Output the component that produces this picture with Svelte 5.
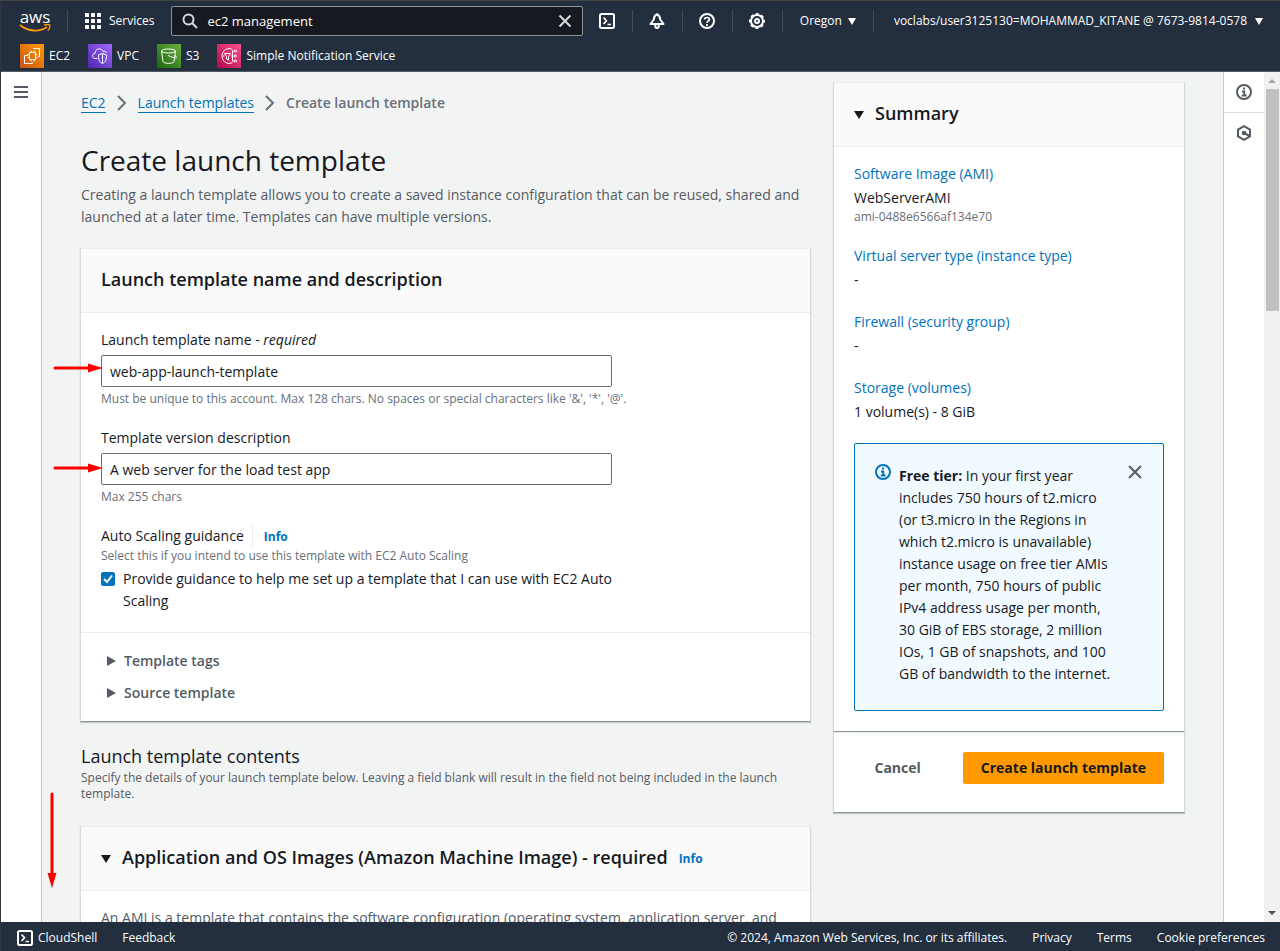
<script>
  let query = $state('ec2 management');
  let templateName = $state('web-app-launch-template');
  let description = $state('A web server for the load test app');
  let guidance = $state(true);

  const summary = [
    { label: 'Software Image (AMI)', value: 'WebServerAMI', note: 'ami-0488e6566af134e70' },
    { label: 'Virtual server type (instance type)', value: '-' },
    { label: 'Firewall (security group)', value: '-' },
    { label: 'Storage (volumes)', value: '1 volume(s) - 8 GiB' }
  ];
</script>

{#snippet shell()}
  <svg width="16" height="16" viewBox="0 0 16 16" fill="none" stroke="currentColor" stroke-width="2" aria-hidden="true">
    <rect x="1" y="1" width="14" height="14" rx="1.5" />
    <path d="M4.500 4.500 7.500 7.800 4.500 11M8.500 11.500H12" stroke-width="1.700" />
  </svg>
{/snippet}

{#snippet info()}
  <svg width="16" height="16" viewBox="0 0 16 16" fill="none" stroke="currentColor" stroke-width="2" aria-hidden="true">
    <circle cx="8" cy="8" r="7" />
    <path d="M8 3.500v2M6 7.500H8.200V11M5.800 11.500h4.800" />
  </svg>
{/snippet}

{#snippet cross()}
  <svg width="16" height="16" viewBox="0 0 16 16" fill="none" stroke="currentColor" stroke-width="2" aria-hidden="true">
    <path d="M2 2 14 14M14 2 2 14" />
  </svg>
{/snippet}

{#snippet caret()}
  <svg width="8" height="7" viewBox="0 0 8 7" fill="currentColor" aria-hidden="true"><path d="M0 0H8L4 7Z" /></svg>
{/snippet}

{#snippet down()}
  <svg width="10" height="8" viewBox="0 0 10 8" fill="currentColor" aria-hidden="true"><path d="M0 0H10L5 8Z" /></svg>
{/snippet}

{#snippet right()}
  <svg width="9" height="10" viewBox="0 0 9 10" fill="currentColor" aria-hidden="true"><path d="M0 0 9 5 0 10Z" /></svg>
{/snippet}

{#snippet chevron()}
  <svg width="10" height="16" viewBox="0 0 10 16" fill="none" stroke="currentColor" stroke-width="2" aria-hidden="true"><path d="M1 1 8 8 1 15" /></svg>
{/snippet}

<div class="page">
  <header class="top">
    <div class="bar">
      <a class="logo" href="#home" aria-label="AWS home">
        <span>aws</span>
        <svg width="32" height="8" viewBox="0 0 32 8" aria-hidden="true">
          <path d="M1 1C9 8 21 8 28 3" fill="none" stroke="#ff9900" stroke-width="1.800" />
          <path d="M25 1.200C28 .2 31 .4 31 1.200S30.500 5 28.800 6.500" fill="none" stroke="#ff9900" stroke-width="1.300" />
        </svg>
      </a>
      <span class="sep"></span>
      <button class="services">
        <svg width="16" height="16" viewBox="0 0 16 16" fill="currentColor" aria-hidden="true">
          {#each [0, 6, 12] as y}
            {#each [0, 6, 12] as x}
              <rect {x} {y} width="4" height="4" rx="0.500" />
            {/each}
          {/each}
        </svg>
        Services
      </button>
      <div class="search">
        <svg width="16" height="16" viewBox="0 0 16 16" fill="none" stroke="#d5dbdb" stroke-width="2" aria-hidden="true">
          <circle cx="6.500" cy="6.500" r="5" /><path d="M10 10 15 15" />
        </svg>
        <input type="text" aria-label="Search" bind:value={query} />
        <button aria-label="Clear search" onclick={() => (query = '')}>
          <svg width="14" height="14" viewBox="0 0 14 14" fill="none" stroke="currentColor" stroke-width="2" aria-hidden="true"><path d="M1.500 1.500 12.500 12.500M12.500 1.500 1.500 12.500" /></svg>
        </button>
      </div>
      <button class="tool" aria-label="CloudShell">{@render shell()}</button>
      <span class="sep"></span>
      <button class="tool" aria-label="Notifications">
        <svg width="16" height="16" viewBox="0 0 16 16" fill="none" stroke="currentColor" stroke-width="2" stroke-linejoin="round" aria-hidden="true">
          <path d="M8 1.200C6 2 5 3.500 4.800 6.500L1.500 11H14.500L11.200 6.500C11 3.500 10 2 8 1.200Z" /><path d="M6.300 12v1.300a1.700 1.700 0 0 0 3.400 0V12" />
        </svg>
      </button>
      <span class="sep"></span>
      <button class="tool" aria-label="Help">
        <svg width="16" height="16" viewBox="0 0 16 16" fill="none" stroke="currentColor" stroke-width="2" aria-hidden="true">
          <circle cx="8" cy="8" r="7" />
          <path d="M5.600 6.500C5.600 3.800 10.400 3.800 10.400 6.500 10.400 8 8 8 8 9.800M8 11v2" stroke-width="1.700" />
        </svg>
      </button>
      <span class="sep"></span>
      <button class="tool" aria-label="Settings">
        <svg width="16" height="16" viewBox="0 0 16 16" fill="none" stroke="currentColor" stroke-width="2" aria-hidden="true">
          <circle cx="8" cy="8" r="6" />
          <circle cx="8" cy="8" r="7" stroke-dasharray="3 2.498" stroke-dashoffset="1.500" />
          <circle cx="8" cy="8" r="2" />
        </svg>
      </button>
      <span class="sep"></span>
      <button class="drop">Oregon {@render caret()}</button>
      <span class="sep"></span>
      <button class="drop account">voclabs/user3125130=MOHAMMAD_KITANE @ 7673-9814-0578 {@render caret()}</button>
    </div>
    <nav class="favs" aria-label="Favorites">
      <a href="#ec2">
        <svg width="24" height="24" viewBox="0 0 24 24" fill="none" stroke="#fff" aria-hidden="true">
          <defs><linearGradient id="g1" x1="0" y1="1" x2="1" y2="0"><stop stop-color="#c8511b" /><stop offset="1" stop-color="#ff9900" /></linearGradient></defs>
          <rect width="24" height="24" fill="url(#g1)" stroke="none" />
          <path d="M9.500 8.500h6v7h-6ZM11 8.500v-2M14 8.500v-2M11 17.500v-2M14 17.500v-2M9.500 10.500h-2M9.500 13.500h-2M17.500 10.500h-2M17.500 13.500h-2M13.500 5V4.500h6v8H18M8 11.500H4.500v8h8V18.500" />
        </svg>EC2</a>
      <a href="#vpc">
        <svg width="24" height="24" viewBox="0 0 24 24" fill="none" stroke="#fff" aria-hidden="true">
          <defs><linearGradient id="g2" x1="0" y1="1" x2="1" y2="0"><stop stop-color="#4d27a8" /><stop offset="1" stop-color="#a166ff" /></linearGradient></defs>
          <rect width="24" height="24" fill="url(#g2)" stroke="none" />
          <path d="M9.500 14.500H7C3.500 14 4 9.500 7 9.500 7 4 13.500 3.500 15 7.500c2-1 3 0 3.200 1.500M14.500 9.500l4 1.500c0 5-1 7.500-4 8.500-3-1-4-3.500-4-8.500ZM14.500 9.500V19" />
        </svg>VPC</a>
      <a href="#s3">
        <svg width="24" height="24" viewBox="0 0 24 24" fill="none" stroke="#fff" aria-hidden="true">
          <defs><linearGradient id="g3" x1="0" y1="1" x2="1" y2="0"><stop stop-color="#1b660f" /><stop offset="1" stop-color="#6cae3e" /></linearGradient></defs>
          <rect width="24" height="24" fill="url(#g3)" stroke="none" />
          <ellipse cx="11.500" cy="7" rx="7" ry="2" />
          <path d="M4.500 7 6 17.500c1 2.500 10 2.500 11 0L18.500 7M11 11.500c3 1.500 8 3 8.500 2 .3-.8-1.500-1.800-2-2" />
        </svg>S3</a>
      <a href="#sns">
        <svg width="24" height="24" viewBox="0 0 24 24" fill="none" stroke="#fff" aria-hidden="true">
          <defs><linearGradient id="g4" x1="0" y1="1" x2="1" y2="0"><stop stop-color="#b0084d" /><stop offset="1" stop-color="#ff4f8b" /></linearGradient></defs>
          <rect width="24" height="24" fill="url(#g4)" stroke="none" />
          <path d="M15.500 5.500C11 3 5.500 6 5.200 11M5.200 13C5.500 18 11 21 15.500 18.500M4 12h3.500M7.500 9.500h6L11.500 12.500v3.500l-2-1v-2.500ZM14 12h4M18 7h-2.500v10H18" />
          <circle cx="18.500" cy="7" r="1" /><circle cx="18.500" cy="12" r="1" /><circle cx="18.500" cy="17" r="1" />
        </svg>Simple Notification Service</a>
    </nav>
  </header>

  <div class="body">
    <div class="rail left">
      <button aria-label="Open navigation">
        <svg width="14" height="12" viewBox="0 0 14 12" stroke="currentColor" stroke-width="2" aria-hidden="true"><path d="M0 1H14M0 6H14M0 11H14" /></svg>
      </button>
    </div>

    <main>
      <div class="column">
        <nav class="crumbs" aria-label="Breadcrumbs">
          <a href="#ec2">EC2</a>{@render chevron()}<a href="#templates">Launch templates</a>{@render chevron()}<span>Create launch template</span>
        </nav>
        <h1>Create launch template</h1>
        <p class="lead">Creating a launch template allows you to create a saved instance configuration that can be reused, shared and launched at a later time. Templates can have multiple versions.</p>

        <section class="card">
          <div class="head"><h2>Launch template name and description</h2></div>
          <div class="form">
            <div class="field">
              <label for="name">Launch template name - <em>required</em></label>
              <input id="name" type="text" bind:value={templateName} />
              <small>Must be unique to this account. Max 128 chars. No spaces or special characters like '&amp;', '*', '@'.</small>
            </div>
            <div class="field">
              <label for="desc">Template version description</label>
              <input id="desc" type="text" bind:value={description} />
              <small>Max 255 chars</small>
            </div>
            <div class="field">
              <div class="title"><span>Auto Scaling guidance</span><a class="info" href="#info">Info</a></div>
              <small>Select this if you intend to use this template with EC2 Auto Scaling</small>
              <label class="check"><input type="checkbox" bind:checked={guidance} /><span>Provide guidance to help me set up a template that I can use with EC2 Auto Scaling</span></label>
            </div>
          </div>
          <div class="more">
            <button>{@render right()}Template tags</button>
            <button>{@render right()}Source template</button>
          </div>
        </section>

        <div class="contents">
          <h2>Launch template contents</h2>
          <p>Specify the details of your launch template below. Leaving a field blank will result in the field not being included in the launch template.</p>
        </div>

        <section class="card">
          <div class="head">
            <button class="toggle">{@render down()}<span>Application and OS Images (Amazon Machine Image) - required</span></button>
            <a class="info" href="#info">Info</a>
          </div>
          <p class="intro">An AMI is a template that contains the software configuration (operating system, application server, and</p>
        </section>
      </div>

      <aside>
        <section class="card">
          <div class="head"><button class="toggle">{@render down()}<span>Summary</span></button></div>
          <div class="facts">
            {#each summary as item}
              <div class="fact">
                <a href="#edit">{item.label}</a>
                <span>{item.value}</span>
                {#if item.note}<small>{item.note}</small>{/if}
              </div>
            {/each}
            <div class="alert">
              <span class="mark">{@render info()}</span>
              <p><b>Free tier:</b> In your first year includes 750 hours of t2.micro (or t3.micro in the Regions in which t2.micro is unavailable) instance usage on free tier AMIs per month, 750 hours of public IPv4 address usage per month, 30 GiB of EBS storage, 2 million IOs, 1 GB of snapshots, and 100 GB of bandwidth to the internet.</p>
              <button aria-label="Dismiss">{@render cross()}</button>
            </div>
          </div>
        </section>
        <section class="card actions">
          <button class="cancel">Cancel</button>
          <button class="primary">Create launch template</button>
        </section>
      </aside>

      <svg class="arrow first" width="50" height="10" viewBox="0 0 50 10" aria-hidden="true"><path d="M2 5H38" stroke="red" stroke-width="3" stroke-linecap="round" /><path d="M35 .5 50 5 35 9.500Z" fill="red" /></svg>
      <svg class="arrow second" width="50" height="10" viewBox="0 0 50 10" aria-hidden="true"><path d="M2 5H38" stroke="red" stroke-width="3" stroke-linecap="round" /><path d="M35 .5 50 5 35 9.500Z" fill="red" /></svg>
      <svg class="arrow third" width="10" height="96" viewBox="0 0 10 96" aria-hidden="true"><path d="M5 2V84" stroke="red" stroke-width="3" stroke-linecap="round" /><path d="M.5 81 5 96 9.500 81Z" fill="red" /></svg>
    </main>

    <div class="rail right">
      <button aria-label="Info panel">{@render info()}</button>
      <button aria-label="Tutorials">
        <svg width="16" height="16" viewBox="0 0 16 16" fill="none" stroke="currentColor" stroke-width="2" aria-hidden="true">
          <path d="M8 1.200 14 4.600V11.400L8 14.800 2 11.400V4.600Z" stroke-linejoin="round" />
          <circle cx="8" cy="8" r="2.300" fill="currentColor" stroke="none" /><path d="M8 8 13.500 11" />
        </svg>
      </button>
    </div>

    <div class="scroll" aria-hidden="true">
      <svg width="8" height="4" viewBox="0 0 8 4"><path d="M0 4 4 0 8 4Z" fill="#a3a3a3" /></svg>
      <span class="thumb"></span>
      <svg width="8" height="4" viewBox="0 0 8 4"><path d="M0 0 4 4 8 0Z" fill="#505050" /></svg>
    </div>
  </div>

  <footer>
    <button>{@render shell()}CloudShell</button>
    <button>Feedback</button>
    <span class="legal">© 2024, Amazon Web Services, Inc. or its affiliates.</span>
    <a href="#privacy">Privacy</a>
    <a href="#terms">Terms</a>
    <a href="#cookies">Cookie preferences</a>
  </footer>
</div>

<style>
  :global(body) { margin: 0; }
  .page {
    box-sizing: border-box;
    height: 100vh;
    display: flex;
    flex-direction: column;
    border-left: 1px solid #33373d;
    border-top: 1px solid #444;
    overflow: hidden;
    background: #f2f3f3;
    color: #16191f;
    font: 14px/22px "Open Sans", sans-serif;
  }
  .page :global(*) { box-sizing: border-box; }
  h1, h2, p { margin: 0; font-weight: 400; }
  button { font: inherit; color: inherit; background: none; border: 0; padding: 0; cursor: pointer; white-space: nowrap; }
  a { color: #0073bb; text-decoration: none; }
  svg { display: block; flex: none; }
  small { font-size: 12px; line-height: 16px; color: #687078; white-space: nowrap; }

  .top { background: #232f3e; color: #fff; border-bottom: 1px solid #545b64; font: 500 12px/20px "Open Sans", sans-serif; }
  .bar { display: flex; align-items: center; height: 40px; padding: 0 17px 0 18px; }
  .logo { display: flex; flex-direction: column; width: 32px; color: #fff; font: 500 17px/12px "Open Sans", sans-serif; text-align: center; }
  .logo svg { margin-top: 1px; }
  .sep { width: 1px; height: 22px; background: #414d5c; flex: none; }
  .logo + .sep { margin: 0 17px 0 16px; }
  .services { display: flex; align-items: center; gap: 8px; }
  .search { display: flex; align-items: center; flex: 1; height: 30px; margin-left: 17px; padding: 0 10px; gap: 9px; background: #16191f; border: 1px solid #879596; border-radius: 2px; }
  .search input { flex: 1; min-width: 0; border: 0; outline: 0; background: none; color: #fff; font: 500 13px/20px "Open Sans", sans-serif; padding: 0; }
  .search button { color: #d5dbdb; }
  .tool { display: grid; place-items: center; width: 49px; height: 40px; }
  .drop { display: flex; align-items: center; gap: 6px; padding: 0 17px; }
  .account { gap: 8px; padding: 0 0 0 20px; }
  .favs { display: flex; gap: 18px; height: 30px; padding: 3px 19px; }
  .favs a { display: flex; align-items: center; gap: 5px; height: 24px; color: #fff; }

  .body { flex: 1; min-height: 0; display: flex; }
  .rail { width: 41px; flex: none; background: #fff; color: #545b64; }
  .rail button { display: grid; place-items: center; width: 40px; height: 40px; }
  .left { border-right: 1px solid #c6cbcb; }
  .right { border-left: 1px solid #c6cbcb; }
  .right button:first-child { height: 41px; border-bottom: 1px solid #d5dbdb; }
  .scroll { width: 16px; flex: none; display: flex; flex-direction: column; align-items: center; background: #f1f1f1; padding: 7px 0; }
  .thumb { width: 13px; height: 222px; margin: 6px 0 auto 1px; background: #c1c1c1; }

  main { position: relative; flex: 1; min-width: 0; display: grid; grid-template-columns: minmax(0, 1fr) 352px; gap: 22px; padding: 10px 38px 0; overflow: hidden; align-items: start; }
  .card { background: #fff; border: 1px solid #d5dbdb; border-top-color: #eaeded; border-bottom-color: #879596; box-shadow: 0 1px 1px rgba(0, 28, 36, 0.200); }
  .head { display: flex; align-items: center; gap: 11px; height: 64px; padding: 0 20px; background: #fafafa; border-bottom: 1px solid #eaeded; }
  .head h2, .toggle { font-weight: 600; font-size: 18px; line-height: 22px; }
  .head h2, .toggle span { padding-bottom: 4px; }
  .toggle { display: flex; align-items: center; gap: 11px; }
  .info { font-size: 12px; line-height: 16px; font-weight: 700; }

  .column { padding-top: 10px; }
  .crumbs { display: flex; align-items: center; gap: 11px; height: 22px; padding-left: 1px; color: #687078; }
  .crumbs a { line-height: 18px; border-bottom: 1px solid #0073bb; }
  .crumbs span { font-weight: 600; }
  h1 { margin: 28px 0 6px 1px; font-size: 28px; line-height: 36px; }
  .lead { margin: 0 0 20px 1px; color: #545b64; }
  .form { padding: 16px 20px 20px; display: flex; flex-direction: column; gap: 20px; max-width: 551px; }
  .field { display: flex; flex-direction: column; }
  .field input[type='text'] { width: 100%; height: 32px; margin: 4px 0; padding: 0 8px; border: 1px solid #687078; border-radius: 2px; background: #fff; font: inherit; color: inherit; }
  .title { display: flex; }
  .title span { padding-right: 8px; margin-right: 11px; border-right: 1px solid #eaeded; }
  .title .info { line-height: 23px; }
  .check { display: flex; gap: 8px; margin-top: 4px; }
  .check input { appearance: none; flex: none; width: 14px; height: 14px; margin: 4px 0; border: 1px solid #687078; border-radius: 2px; background: #fff; }
  .check input:checked { border-color: #0073bb; background: #0073bb url("data:image/svg+xml,%3Csvg xmlns='http://www.w3.org/2000/svg' viewBox='0 0 12 12'%3E%3Cpath d='M2 6l3 3 5-6.500' fill='none' stroke='white' stroke-width='2'/%3E%3C/svg%3E"); }
  .more { display: flex; flex-direction: column; align-items: flex-start; gap: 10px; padding: 17px 26px; border-top: 1px solid #eaeded; color: #545b64; }
  .more button { display: flex; align-items: center; gap: 8px; font-weight: 600; }
  .contents { margin: 23px 0 24px 1px; }
  .contents h2 { font-size: 18px; line-height: 22px; padding-bottom: 3px; }
  .contents p { font-size: 12px; line-height: 16px; color: #545b64; }
  .intro { padding: 16px 20px; color: #545b64; }

  aside .card { border-color: #eaeded #d5dbdb #879596; }
  .facts { display: flex; flex-direction: column; gap: 20px; padding: 16px 20px 20px; }
  .fact { display: flex; flex-direction: column; }
  .fact a { margin-bottom: 2px; }
  .alert { display: flex; align-items: flex-start; padding: 20px; border: 1px solid #0073bb; border-radius: 2px; background: #f1faff; }
  .mark { color: #0073bb; margin-right: 8px; }
  .alert p { flex: 1; padding: 1px 0 5px; }
  .alert b { font-weight: 700; }
  .alert button { width: 16px; margin-left: 16px; color: #545b64; }
  .actions { display: flex; justify-content: flex-end; gap: 22px; padding: 19px 20px 28px; }
  .actions button { height: 32px; padding: 0 20px; border-radius: 2px; font-weight: 700; }
  .actions .cancel { color: #545b64; }
  .actions .primary { padding: 0 18px; background: #ff9900; color: #16191f; }

  .arrow { position: absolute; }
  .first { left: 11px; top: 291px; }
  .second { left: 11px; top: 391px; }
  .third { left: 5px; top: 720px; }

  footer { display: flex; align-items: center; gap: 25px; height: 29px; padding: 2px 15px 0 16px; background: #232f3e; color: #fff; font: 500 12px/20px "Open Sans", sans-serif; }
  footer button { display: flex; align-items: center; gap: 5px; }
  footer a { color: #fff; }
  .legal { margin-left: auto; }
</style>
